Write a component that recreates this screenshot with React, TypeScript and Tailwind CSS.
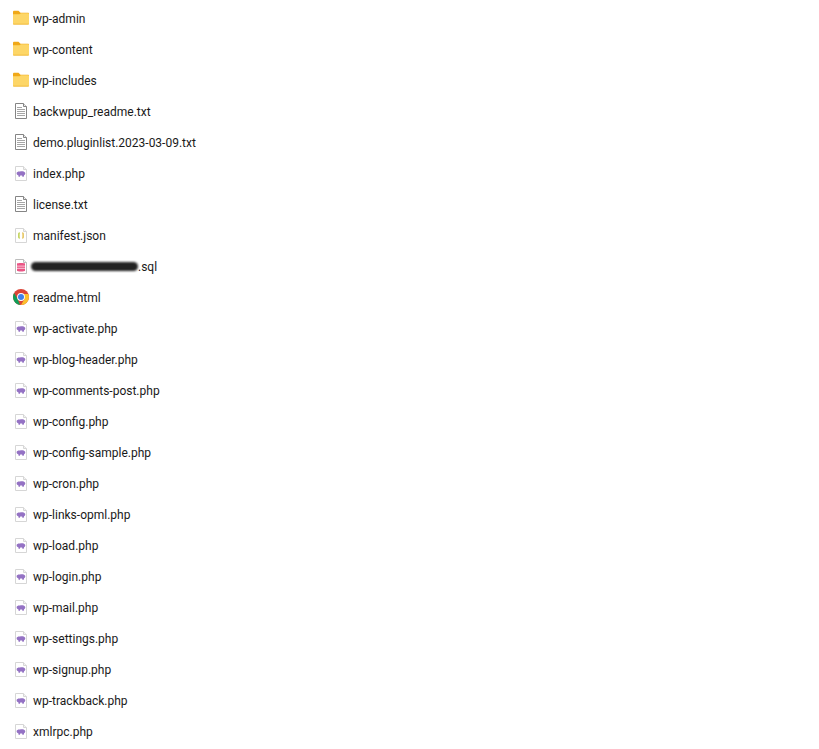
const FILES = [
  { name: "wp-admin", type: "folder" },
  { name: "wp-content", type: "folder" },
  { name: "wp-includes", type: "folder" },
  { name: "backwpup_readme.txt", type: "txt" },
  { name: "demo.pluginlist.2023-03-09.txt", type: "txt" },
  { name: "index.php", type: "php" },
  { name: "license.txt", type: "txt" },
  { name: "manifest.json", type: "json" },
  { name: ".sql", type: "sql" },
  { name: "readme.html", type: "chrome" },
  { name: "wp-activate.php", type: "php" },
  { name: "wp-blog-header.php", type: "php" },
  { name: "wp-comments-post.php", type: "php" },
  { name: "wp-config.php", type: "php" },
  { name: "wp-config-sample.php", type: "php" },
  { name: "wp-cron.php", type: "php" },
  { name: "wp-links-opml.php", type: "php" },
  { name: "wp-load.php", type: "php" },
  { name: "wp-login.php", type: "php" },
  { name: "wp-mail.php", type: "php" },
  { name: "wp-settings.php", type: "php" },
  { name: "wp-signup.php", type: "php" },
  { name: "wp-trackback.php", type: "php" },
  { name: "xmlrpc.php", type: "php" },
]

function Sheet({ children, stroke = "#d6d6d6" }: { children?: React.ReactNode; stroke?: string }) {
  return (
    <svg width="16" height="16" viewBox="0 0 16 16">
      <path d="M2.5 1.5H10.5L13.5 4.5V15.5H2.5Z" fill="#fff" stroke={stroke} />
      <path d="M10.5 1.5V4.5H13.5" fill="#f2f2f2" stroke={stroke} />
      {children}
    </svg>
  )
}

function FileIcon({ type }: { type: string }) {
  if (type === "folder") {
    return (
      <svg width="16" height="16" viewBox="0 0 16 16">
        <path d="M0 2C0 1.2 .5 .7 1.2 .7H5.5L7.5 2.7H15C15.6 2.7 16 3.1 16 3.7V6H0Z" fill="#f0a818" />
        <path d="M0 4.2H6.5L8 3.2H15C15.6 3.2 16 3.6 16 4.2V13.5C16 14.1 15.6 14.5 15 14.5H1C.4 14.5 0 14.1 0 13.5Z" fill="#fdd667" />
        <path d="M0 13.7H16V13.5C16 14.1 15.6 14.5 15 14.5H1C.4 14.5 0 14.1 0 13.5Z" fill="#eeb22f" />
      </svg>
    )
  }
  if (type === "txt") {
    return (
      <svg width="16" height="16" viewBox="0 0 16 16">
        <path d="M2.5 .5H10.5L13.5 3.5V15.5H2.5Z" fill="#fff" stroke="#858585" />
        <path d="M10.5 .5V3.5H13.5" fill="#eee" stroke="#858585" />
        <path d="M4 4.5H9M4 6.5H12M4 8.5H12M4 10.5H12M4 12.5H12" stroke="#a6a6a6" />
      </svg>
    )
  }
  if (type === "php") {
    return (
      <Sheet>
        <path d="M3.6 8C4 6.6 5.8 6.2 7 6.6C8.4 6 11 6.2 12 7.4C12.6 8.3 12.2 9.6 11.2 10L10.7 11.8H9.4L9.1 10.6H7.2L6.9 11.8H5.6L5.3 10.2C4.3 10 3.4 9 3.6 8Z" fill="#9472c4" />
      </Sheet>
    )
  }
  if (type === "json") {
    return (
      <Sheet>
        <path d="M6.7 6C5.7 6 5.9 7 5.9 8.5C5.9 10 5.7 11 6.7 11" fill="none" stroke="#b5c934" strokeWidth="1.3" />
        <path d="M9.3 6C10.3 6 10.1 7 10.1 8.5C10.1 10 10.3 11 9.3 11" fill="none" stroke="#e0b83c" strokeWidth="1.3" />
      </Sheet>
    )
  }
  if (type === "sql") {
    return (
      <Sheet stroke="#bdbdbd">
        <path d="M4 5.6C4 4.8 12 4.8 12 5.6V7.8H4Z" fill="#ea5585" />
        <rect x="4" y="8.3" width="8" height="2.2" fill="#ee6b95" />
        <path d="M4 11H12V12.8C12 13.7 4 13.7 4 12.8Z" fill="#ea5585" />
      </Sheet>
    )
  }
  return (
    <svg width="16" height="16" viewBox="0 0 16 16">
      <circle cx="8" cy="8" r="8" fill="#db4437" />
      <path d="M8 16A8 8 0 0 1 1.1 4L4.6 10L7 15.9Z" fill="#0f9d58" />
      <path d="M8 16A8 8 0 0 0 16 8C16 6.9 15.8 5.9 15.4 5H8L11.5 10Z" fill="#fbc02d" />
      <circle cx="8" cy="8" r="3.9" fill="#fff" />
      <circle cx="8" cy="8" r="3" fill="#3f80ea" />
    </svg>
  )
}

export default function App() {
  return (
    <div className="h-[749px] overflow-hidden bg-white pt-[2px] pl-[13px] text-[12px] text-[#1a1a1a] [font-family:Roboto,'Noto_Sans',sans-serif]">
      {FILES.map((file) => (
        <div key={file.name} className="flex h-[31px] items-center gap-1">
          <FileIcon type={file.type} />
          {file.type === "sql" ? (
            <span className="flex items-center pt-[2px]">
              <span className="ml-[-2px] h-[9px] w-[107px] rounded-full bg-[#222] blur-[1px]" />
              <span>{file.name}</span>
            </span>
          ) : (
            <span className="pt-[2px]">{file.name}</span>
          )}
        </div>
      ))}
    </div>
  )
}
